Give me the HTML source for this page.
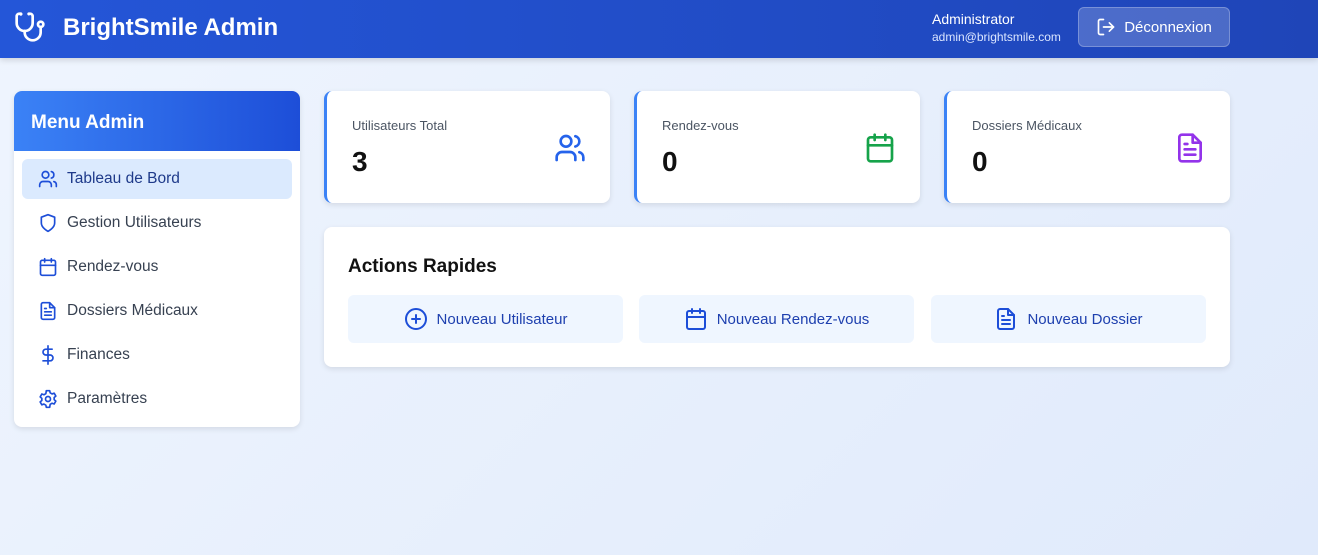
<!DOCTYPE html>
<html><head><meta charset="utf-8"><style>
*{box-sizing:border-box;margin:0;padding:0}
body{width:1318px;height:555px;overflow:hidden;font-family:"Liberation Sans","DejaVu Sans",sans-serif;background:linear-gradient(135deg,#eff5fe,#e0eafb);position:relative}
.hdr{position:absolute;left:0;top:0;width:1318px;height:58px;background:linear-gradient(90deg,#2456d8,#1f45b8);box-shadow:0 2px 6px rgba(0,0,0,.15);color:#fff}
.logo{position:absolute;left:14px;top:11px}
.title{position:absolute;left:63px;top:14px;font-size:24px;font-weight:bold}
.user{position:absolute;left:932px;top:11px}
.user .n{font-size:14px}
.user .e{font-size:12px;margin-top:3px;color:#dbe6ff}
.btn{position:absolute;left:1078px;top:7px;width:152px;height:40px;background:rgba(255,255,255,.2);border:1px solid rgba(255,255,255,.25);border-radius:6px;font-size:15px;display:flex;align-items:center;justify-content:center;gap:8px}
.side{position:absolute;left:14px;top:91px;width:286px;height:336px;background:#fff;border-radius:8px;box-shadow:0 2px 6px rgba(0,0,0,.1);overflow:hidden}
.sh{height:60px;background:linear-gradient(90deg,#3b82f6,#1d4ed8);color:#fff;font-size:19px;font-weight:bold;padding:21px 17px}
.it{position:absolute;left:8px;width:270px;height:40px;border-radius:6px;display:flex;align-items:center;padding-left:16px;gap:9px;font-size:15.5px;color:#374151}
.it.a{background:#dbeafe;color:#1e3a8a}
.card{position:absolute;top:91px;width:286px;height:112px;background:#fff;border-radius:8px;border-left:3px solid #3b82f6;box-shadow:0 2px 6px rgba(0,0,0,.1)}
.card .l{position:absolute;left:25px;top:27px;font-size:13px;color:#4b5563}
.card .v{position:absolute;left:25px;top:55px;font-size:28px;font-weight:bold;color:#111}
.card svg{position:absolute;right:24px;top:41px}
.act{position:absolute;left:324px;top:227px;width:906px;height:140px;background:#fff;border-radius:8px;box-shadow:0 2px 6px rgba(0,0,0,.1)}
.act h2{position:absolute;left:24px;top:29px;font-size:19px;color:#111}
.ab{position:absolute;top:68px;width:275px;height:48px;background:#eff6ff;border-radius:6px;display:flex;align-items:center;justify-content:center;gap:9px;font-size:15px;color:#1e40af}
svg{flex:none}
</style></head><body>
<div class="hdr">
<svg class="logo" width="32" height="32" viewBox="0 0 24 24" fill="none" stroke="#fff" stroke-width="2" stroke-linecap="round" stroke-linejoin="round"><path d="M4.8 2.3A.3.3 0 1 0 5 2H4a2 2 0 0 0-2 2v5a6 6 0 0 0 6 6 6 6 0 0 0 6-6V4a2 2 0 0 0-2-2h-1a.2.2 0 1 0 .3.3"/><path d="M8 15v1a6 6 0 0 0 6 6 6 6 0 0 0 6-6v-4"/><circle cx="20" cy="10" r="2"/></svg>
<div class="title">BrightSmile Admin</div>
<div class="user"><div class="n">Administrator</div><div class="e">admin@brightsmile.com</div></div>
<div class="btn"><svg width="20" height="20" viewBox="0 0 24 24" fill="none" stroke="#fff" stroke-width="2" stroke-linecap="round" stroke-linejoin="round"><path d="M9 21H5a2 2 0 0 1-2-2V5a2 2 0 0 1 2-2h4"/><path d="M16 17l5-5-5-5"/><path d="M21 12H9"/></svg>Déconnexion</div>
</div>
<div class="side">
<div class="sh">Menu Admin</div>
<div class="it a" style="top:68px"><svg width="20" height="20" viewBox="0 0 24 24" fill="none" stroke="#1d4ed8" stroke-width="2" stroke-linecap="round"><path d="M16 21v-2a4 4 0 0 0-4-4H6a4 4 0 0 0-4 4v2"/><circle cx="9" cy="7" r="4"/><path d="M22 21v-2a4 4 0 0 0-3-3.87M16 3.13a4 4 0 0 1 0 7.75"/></svg>Tableau de Bord</div>
<div class="it" style="top:112px"><svg width="20" height="20" viewBox="0 0 24 24" fill="none" stroke="#1d4ed8" stroke-width="2" stroke-linejoin="round"><path d="M12 22s8-4 8-10V5l-8-3-8 3v7c0 6 8 10 8 10z"/></svg>Gestion Utilisateurs</div>
<div class="it" style="top:156px"><svg width="20" height="20" viewBox="0 0 24 24" fill="none" stroke="#1d4ed8" stroke-width="2" stroke-linecap="round"><rect x="3" y="4" width="18" height="18" rx="2"/><path d="M16 2v4M8 2v4M3 10h18"/></svg>Rendez-vous</div>
<div class="it" style="top:200px"><svg width="20" height="20" viewBox="0 0 24 24" fill="none" stroke="#1d4ed8" stroke-width="2" stroke-linecap="round" stroke-linejoin="round"><path d="M14 2H6a2 2 0 0 0-2 2v16a2 2 0 0 0 2 2h12a2 2 0 0 0 2-2V8z"/><path d="M14 2v6h6M16 13H8M16 17H8M10 9H8"/></svg>Dossiers Médicaux</div>
<div class="it" style="top:244px"><svg width="20" height="20" viewBox="0 0 24 24" fill="none" stroke="#1d4ed8" stroke-width="2" stroke-linecap="round"><path d="M12 1v22M17 5H9.5a3.5 3.5 0 0 0 0 7h5a3.5 3.5 0 0 1 0 7H6"/></svg>Finances</div>
<div class="it" style="top:288px"><svg width="20" height="20" viewBox="0 0 24 24" fill="none" stroke="#1d4ed8" stroke-width="2" stroke-linejoin="round"><path d="M10 2h4l.6 2.6 2.3 1.3 2.5-.9 2 3.5-2 1.7v2.6l2 1.7-2 3.5-2.5-.9-2.3 1.3L14 22h-4l-.6-2.6-2.3-1.3-2.5.9-2-3.5 2-1.7v-2.6l-2-1.7 2-3.5 2.5.9 2.3-1.3z"/><circle cx="12" cy="12" r="3"/></svg>Paramètres</div>
</div>
<div class="card" style="left:324px"><div class="l">Utilisateurs Total</div><div class="v">3</div><svg width="32" height="32" viewBox="0 0 24 24" fill="none" stroke="#2563eb" stroke-width="2" stroke-linecap="round"><path d="M16 21v-2a4 4 0 0 0-4-4H6a4 4 0 0 0-4 4v2"/><circle cx="9" cy="7" r="4"/><path d="M22 21v-2a4 4 0 0 0-3-3.87M16 3.13a4 4 0 0 1 0 7.75"/></svg></div>
<div class="card" style="left:634px"><div class="l">Rendez-vous</div><div class="v">0</div><svg width="32" height="32" viewBox="0 0 24 24" fill="none" stroke="#16a34a" stroke-width="2" stroke-linecap="round"><rect x="3" y="4" width="18" height="18" rx="2"/><path d="M16 2v4M8 2v4M3 10h18"/></svg></div>
<div class="card" style="left:944px"><div class="l">Dossiers Médicaux</div><div class="v">0</div><svg width="32" height="32" viewBox="0 0 24 24" fill="none" stroke="#9333ea" stroke-width="2" stroke-linecap="round" stroke-linejoin="round"><path d="M14 2H6a2 2 0 0 0-2 2v16a2 2 0 0 0 2 2h12a2 2 0 0 0 2-2V8z"/><path d="M14 2v6h6M16 13H8M16 17H8M10 9H8"/></svg></div>
<div class="act"><h2>Actions Rapides</h2>
<div class="ab" style="left:24px"><svg width="24" height="24" viewBox="0 0 24 24" fill="none" stroke="#1d4ed8" stroke-width="2" stroke-linecap="round"><circle cx="12" cy="12" r="10"/><path d="M12 8v8M8 12h8"/></svg>Nouveau Utilisateur</div>
<div class="ab" style="left:315px"><svg width="24" height="24" viewBox="0 0 24 24" fill="none" stroke="#1d4ed8" stroke-width="2" stroke-linecap="round"><rect x="3" y="4" width="18" height="18" rx="2"/><path d="M16 2v4M8 2v4M3 10h18"/></svg>Nouveau Rendez-vous</div>
<div class="ab" style="left:607px"><svg width="24" height="24" viewBox="0 0 24 24" fill="none" stroke="#1d4ed8" stroke-width="2" stroke-linecap="round" stroke-linejoin="round"><path d="M14 2H6a2 2 0 0 0-2 2v16a2 2 0 0 0 2 2h12a2 2 0 0 0 2-2V8z"/><path d="M14 2v6h6M16 13H8M16 17H8M10 9H8"/></svg>Nouveau Dossier</div>
</div>
</body></html>
